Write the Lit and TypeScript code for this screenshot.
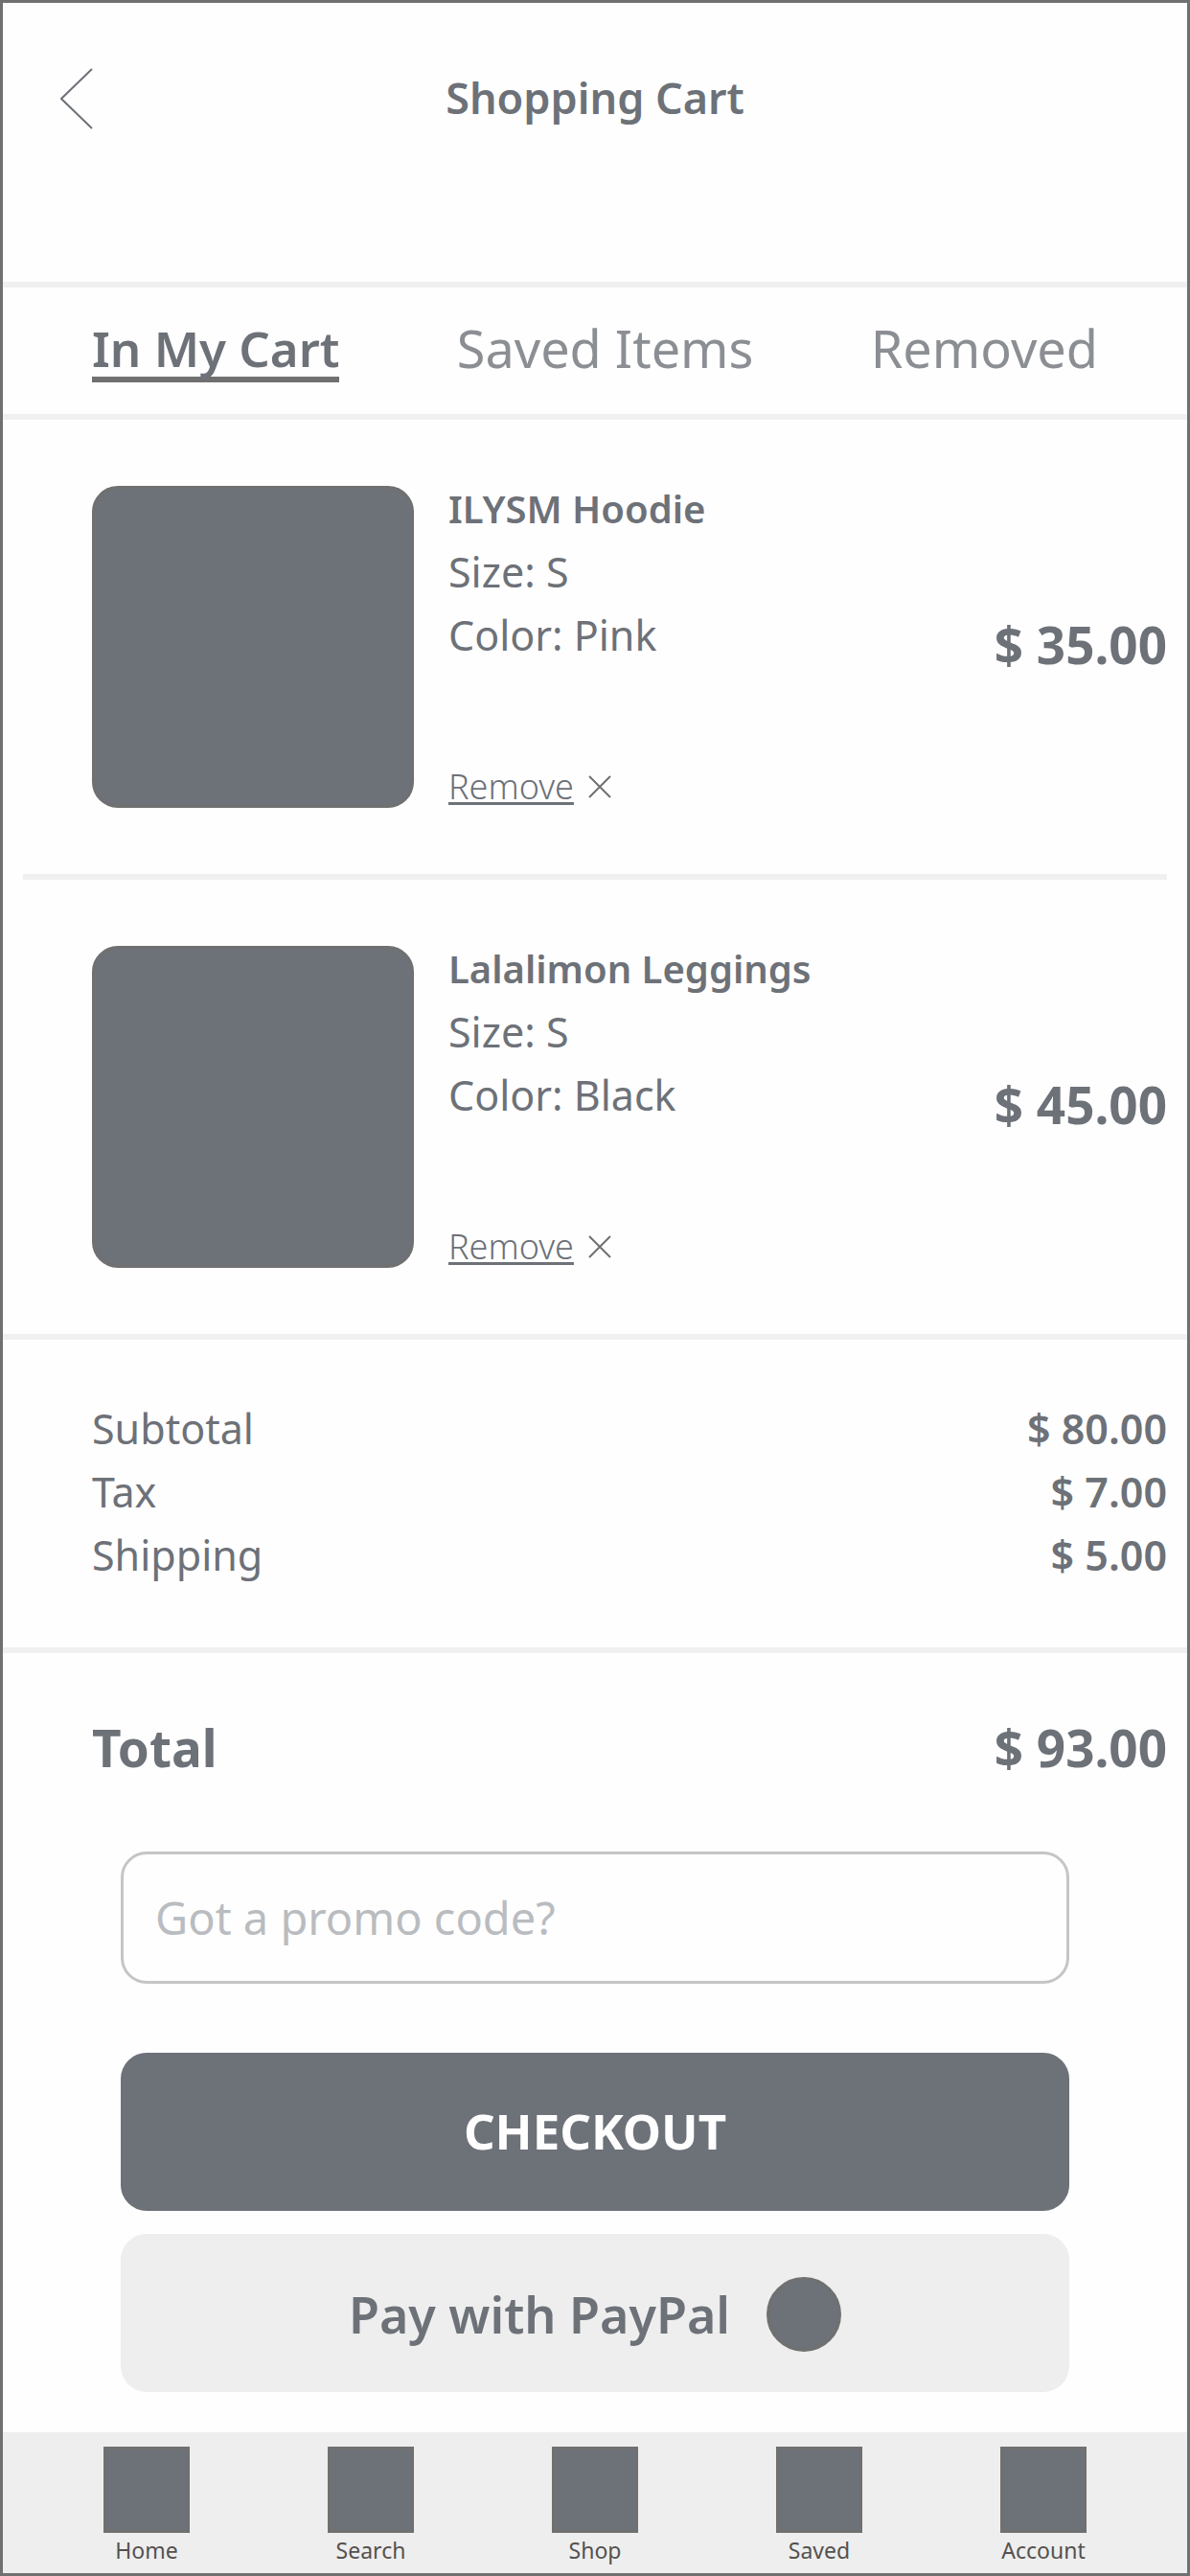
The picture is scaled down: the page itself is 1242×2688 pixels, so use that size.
import { LitElement, html, css } from "lit";
import { customElement, property } from "lit/decorators.js";

interface CartItem {
  id: string;
  name: string;
  size: string;
  color: string;
  price: string;
}

const ITEMS: CartItem[] = [
  { id: "hoodie", name: "ILYSM Hoodie", size: "S", color: "Pink", price: "$ 35.00" },
  { id: "leggings", name: "Lalalimon Leggings", size: "S", color: "Black", price: "$ 45.00" },
];

const SUMMARY: [string, string][] = [
  ["Subtotal", "$ 80.00"],
  ["Tax", "$ 7.00"],
  ["Shipping", "$ 5.00"],
];

const NAV = ["Home", "Search", "Shop", "Saved", "Account"];

@customElement("cart-item")
class CartItemRow extends LitElement {
  @property({ attribute: false }) item!: CartItem;

  static styles = css`
    :host {
      display: flex;
      gap: 36px;
      padding: 69px 0 69px 72px;
    }
    .thumb {
      box-sizing: border-box;
      flex: none;
      width: 336px;
      height: 336px;
      border: 3px solid #707070;
      border-radius: 27px;
      background: #6d7178;
    }
    .details {
      flex: 1;
      display: flex;
      flex-direction: column;
      align-items: flex-start;
      gap: 18px;
      font-size: 43px;
      line-height: 48px;
    }
    h2,
    p {
      margin: 0;
    }
    h2 {
      font-size: 40px;
      font-weight: 600;
      line-height: 48px;
    }
    .remove {
      display: flex;
      align-items: center;
      gap: 15px;
      margin-top: auto;
      padding: 0;
      border: 0;
      background: none;
      color: inherit;
      font: 300 36px/45px "Noto Sans", sans-serif;
      cursor: pointer;
    }
    .remove span {
      text-decoration: underline;
      text-decoration-thickness: 3px;
      text-underline-offset: 3px;
      text-decoration-skip-ink: none;
    }
    .remove svg {
      width: 24px;
      height: 24px;
    }
    .price {
      align-self: center;
      padding-bottom: 4px;
      font-size: 53px;
      font-weight: 700;
      line-height: 66px;
    }
  `;

  render() {
    const { name, size, color, price } = this.item;
    return html`
      <div class="thumb"></div>
      <div class="details">
        <h2>${name}</h2>
        <p>Size: ${size}</p>
        <p>Color: ${color}</p>
        <button class="remove" type="button">
          <span>Remove</span>
          <svg viewBox="0 0 24 24" aria-hidden="true">
            <path d="M1 1 23 23M23 1 1 23" fill="none" stroke="#707070" stroke-width="2" />
          </svg>
        </button>
      </div>
      <div class="price">${price}</div>
    `;
  }
}

@customElement("app-root")
class AppRoot extends LitElement {
  static styles = css`
    :host {
      display: block;
      color: #6d7178;
      font-family: "Noto Sans", sans-serif;
    }
    .page {
      box-sizing: border-box;
      display: flex;
      flex-direction: column;
      min-height: 100vh;
      border: 3px solid #707070;
      background: #fefefe;
    }
    .header {
      display: grid;
      grid-template-columns: 1fr auto 1fr;
      align-items: center;
      padding: 66px 60px 159px;
      border-bottom: 6px solid #f0f0f0;
    }
    .header h1 {
      margin: 0;
      font-size: 45px;
      font-weight: 600;
      line-height: 66px;
    }
    .back {
      justify-self: start;
      width: 36px;
      height: 66px;
    }
    .back svg {
      display: block;
      width: 36px;
      height: 66px;
    }
    .tabs {
      display: flex;
      justify-content: space-between;
      padding: 33px 93px;
      border-bottom: 6px solid #f0f0f0;
    }
    .tab {
      border-bottom: 6px solid transparent;
      color: #8b8e93;
      font-size: 54px;
      line-height: 60px;
      text-decoration: none;
    }
    .tab.active {
      border-color: #707070;
      color: #6d7178;
      font-size: 51px;
      font-weight: 600;
    }
    .items {
      margin: 0;
      padding: 0 21px;
      border-bottom: 6px solid #f0f0f0;
      list-style: none;
    }
    .items li + li {
      border-top: 6px solid #f0f0f0;
    }
    .row {
      display: flex;
      justify-content: space-between;
      line-height: 66px;
    }
    dl,
    dt,
    dd {
      margin: 0;
    }
    .summary {
      padding: 60px 21px 63px 93px;
      border-bottom: 6px solid #f0f0f0;
      font-size: 43px;
    }
    .summary dd {
      font-weight: 600;
    }
    .total {
      padding: 66px 21px 75px 93px;
      font-size: 53px;
      font-weight: 700;
    }
    .actions {
      display: flex;
      flex-direction: column;
      padding: 0 123px 42px;
    }
    .promo {
      box-sizing: border-box;
      width: 100%;
      height: 138px;
      margin: 0 0 72px;
      padding: 0 33px;
      border: 3px solid #c5c5c5;
      border-radius: 27px;
      background: none;
      color: #6d7178;
      font: 400 47px/66px "Noto Sans", sans-serif;
    }
    .promo::placeholder {
      color: #b9bcc0;
      opacity: 1;
    }
    .button {
      display: flex;
      align-items: center;
      justify-content: center;
      height: 165px;
      padding: 0 0 3px;
      border: 0;
      border-radius: 27px;
      background: #6d7178;
      color: #fefefe;
      font: 700 51px/66px "Noto Sans", sans-serif;
      cursor: pointer;
    }
    .button.paypal {
      gap: 38px;
      margin-top: 24px;
      padding: 3px 0 0;
      background: #eee;
      color: #6d7178;
      font-size: 52px;
      font-weight: 600;
    }
    .logo {
      box-sizing: border-box;
      width: 78px;
      height: 78px;
      border: 3px solid #707070;
      border-radius: 50%;
      background: #6d7178;
    }
    .nav {
      display: grid;
      grid-template-columns: repeat(5, 1fr);
      margin-top: auto;
      padding: 15px 33px 6px;
      background: #eee;
    }
    .nav a {
      display: flex;
      flex-direction: column;
      align-items: center;
      color: #55514e;
      font-size: 23px;
      line-height: 36px;
      text-decoration: none;
    }
    .tile {
      box-sizing: border-box;
      width: 90px;
      height: 90px;
      border: 3px solid #707070;
      background: #6d7178;
    }
  `;

  render() {
    return html`
      <div class="page">
        <header class="header">
          <a class="back" href="#shop" aria-label="Back">
            <svg viewBox="0 0 36 66" aria-hidden="true">
              <path d="M33 3 1 34 33 65" fill="none" stroke="#6d7178" stroke-width="2" />
            </svg>
          </a>
          <h1>Shopping Cart</h1>
        </header>

        <nav class="tabs" aria-label="Cart lists">
          <a class="tab active" href="#cart" aria-current="page">In My Cart</a>
          <a class="tab" href="#saved-items">Saved Items</a>
          <a class="tab" href="#removed">Removed</a>
        </nav>

        <ul class="items">
          ${ITEMS.map((item) => html`<li><cart-item id=${item.id} .item=${item}></cart-item></li>`)}
        </ul>

        <dl class="summary">
          ${SUMMARY.map(([label, value]) => html`<div class="row"><dt>${label}</dt><dd>${value}</dd></div>`)}
        </dl>

        <dl class="total">
          <div class="row"><dt>Total</dt><dd>$ 93.00</dd></div>
        </dl>

        <form class="actions">
          <input class="promo" type="text" name="promo" aria-label="Promo code" placeholder="Got a promo code?" />
          <button class="button" type="button">CHECKOUT</button>
          <button class="button paypal" type="button">Pay with PayPal<span class="logo"></span></button>
        </form>

        <nav class="nav" aria-label="Main">
          ${NAV.map((label) => html`<a href="#${label.toLowerCase()}"><span class="tile"></span>${label}</a>`)}
        </nav>
      </div>
    `;
  }
}
